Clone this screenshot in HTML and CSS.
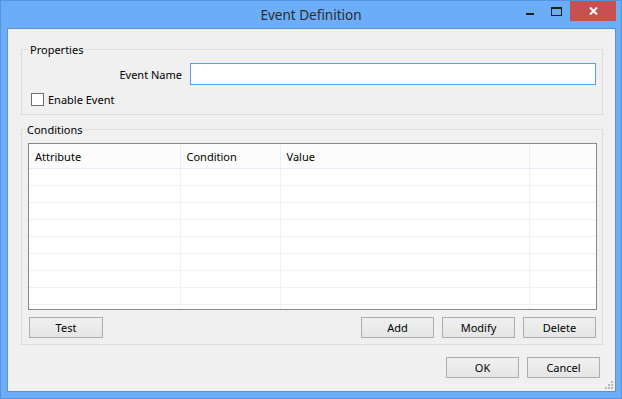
FILE: index.html
```html
<!DOCTYPE html>
<html lang="en">

<head>
    <meta charset="UTF-8">
    <title>Event Definition</title>
    <link rel="stylesheet" href="styles.css">
</head>

<body>
    <div class="window">
        <div class="title-bar">
            <div class="title">Event Definition</div>
            <div class="controls">
                <span class="btn-min"><i></i></span>
                <span class="btn-max"><i></i></span>
                <span class="btn-close">
                    <svg width="9" height="8" viewBox="0 0 9 8">
                        <path d="M1 0.5 L8 7.5 M8 0.5 L1 7.5" stroke="#fff" stroke-width="2" />
                    </svg>
                </span>
            </div>
        </div>

        <div class="client">
            <fieldset class="group group-props">
                <legend>Properties</legend>
                <div class="field-row">
                    <label for="event-name" class="field-label">Event Name</label>
                    <input type="text" id="event-name" class="text-box">
                </div>
                <div class="check-row">
                    <span class="check-box"></span>
                    <span>Enable Event</span>
                </div>
            </fieldset>

            <fieldset class="group group-cond">
                <legend>Conditions</legend>
                <div class="list-view">
                    <table>
                        <colgroup>
                            <col style="width: 151px">
                            <col style="width: 100px">
                            <col style="width: 249px">
                            <col>
                        </colgroup>
                        <thead>
                            <tr>
                                <th>Attribute</th>
                                <th>Condition</th>
                                <th>Value</th>
                                <th></th>
                            </tr>
                        </thead>
                        <tbody>
                            <tr><td></td><td></td><td></td><td></td></tr>
                            <tr><td></td><td></td><td></td><td></td></tr>
                            <tr><td></td><td></td><td></td><td></td></tr>
                            <tr><td></td><td></td><td></td><td></td></tr>
                            <tr><td></td><td></td><td></td><td></td></tr>
                            <tr><td></td><td></td><td></td><td></td></tr>
                            <tr><td></td><td></td><td></td><td></td></tr>
                            <tr><td></td><td></td><td></td><td></td></tr>
                            <tr><td></td><td></td><td></td><td></td></tr>
                        </tbody>
                    </table>
                </div>
                <div class="button-row">
                    <button class="win-btn">Test</button>
                    <div class="spacer"></div>
                    <button class="win-btn">Add</button>
                    <button class="win-btn">Modify</button>
                    <button class="win-btn">Delete</button>
                </div>
            </fieldset>

            <div class="dialog-buttons">
                <button class="win-btn">OK</button>
                <button class="win-btn">Cancel</button>
            </div>

            <svg class="grip" width="8" height="8" viewBox="0 0 8 8">
                <rect x="6" y="0" width="2" height="2" fill="#b8b8b8" />
                <rect x="3" y="3" width="2" height="2" fill="#b8b8b8" />
                <rect x="6" y="3" width="2" height="2" fill="#b8b8b8" />
                <rect x="0" y="6" width="2" height="2" fill="#b8b8b8" />
                <rect x="3" y="6" width="2" height="2" fill="#b8b8b8" />
                <rect x="6" y="6" width="2" height="2" fill="#b8b8b8" />
            </svg>
        </div>
    </div>
</body>

</html>
```

FILE: styles.css
```css
* {
    margin: 0;
    padding: 0;
    box-sizing: border-box;
}

body {
    font-family: "Noto Sans", "Open Sans", sans-serif;
    font-size: 11px;
    color: #000;
    background-color: #6badf6;
}

.window {
    width: 622px;
    height: 399px;
    background-color: #6badf6;
    border: 1px solid #5793df;
    display: flex;
    flex-direction: column;
}

/* title bar */
.title-bar {
    position: relative;
    height: 29px;
    display: flex;
    justify-content: center;
    align-items: center;
}

.title {
    font-size: 13.5px;
    color: #2b2b2b;
    padding-top: 1px;
}

.controls {
    position: absolute;
    top: 0;
    right: 5px;
    display: flex;
    align-items: flex-start;
}

.btn-min,
.btn-max {
    width: 26px;
    height: 20px;
    position: relative;
}

.btn-min i {
    position: absolute;
    left: 8px;
    top: 12px;
    width: 8px;
    height: 2px;
    background-color: #1f1f1f;
}

.btn-max i {
    position: absolute;
    left: 7px;
    top: 6px;
    width: 11px;
    height: 9px;
    border: 1px solid #1f1f1f;
    border-top-width: 2px;
}

.btn-close {
    width: 46px;
    height: 20px;
    background-color: #c75050;
    display: flex;
    justify-content: center;
    align-items: center;
}

/* client area */
.client {
    position: relative;
    flex-grow: 1;
    margin: 0 5px 6px 6px;
    border: 1px solid #5b8fd4;
    background-color: #f0f0f0;
    padding: 13px 12px 13px 13px;
}

.group {
    border: 1px solid #dcdcdc;
    padding: 0 5px 7px 9px;
}

.group legend {
    padding: 0 2px;
    margin-left: -3px;
    line-height: 15px;
}

.group-cond {
    margin-top: 7px;
    padding: 0 5px 6px 6px;
}

.field-row {
    display: flex;
    align-items: center;
    margin-top: 6px;
}

.field-label {
    width: 151px;
    text-align: right;
    margin-right: 8px;
}

.text-box {
    flex-grow: 1;
    height: 22px;
    margin-right: 1px;
    border: 1px solid #569de5;
    background-color: #fff;
    outline: none;
}

.check-row {
    display: flex;
    align-items: center;
    height: 16px;
    margin-top: 6px;
}

.check-box {
    width: 13px;
    height: 13px;
    border: 1px solid #707070;
    background-color: #fff;
    margin-right: 4px;
}

/* list view */
.list-view {
    margin-top: 6px;
    height: 167px;
    border: 1px solid #828790;
    background-color: #fff;
    overflow: hidden;
}

.list-view table {
    width: 100%;
    border-collapse: collapse;
    table-layout: fixed;
}

.list-view th {
    height: 24px;
    font-weight: normal;
    text-align: left;
    padding: 1px 0 0 6px;
    background-color: #fcfcfc;
    border-right: 1px solid #e5eef8;
    border-bottom: 1px solid #e5eef8;
}

.list-view td {
    height: 17px;
    border-right: 1px solid #f0f0f0;
    border-bottom: 1px solid #f0f0f0;
}

.list-view th:last-child,
.list-view td:last-child {
    border-right: none;
}

/* buttons */
.button-row {
    display: flex;
    gap: 8px;
    margin-top: 7px;
    padding: 0 1px;
}

.spacer {
    flex-grow: 1;
}

.win-btn {
    width: 73px;
    height: 21px;
    font-family: inherit;
    font-size: 11px;
    color: #000;
    border: 1px solid #acacac;
    background: linear-gradient(#f0f0f0, #e5e5e5);
}

.button-row .win-btn:first-child {
    width: 74px;
}

.dialog-buttons {
    display: flex;
    justify-content: flex-end;
    gap: 8px;
    margin-top: 12px;
    padding-right: 3px;
}

.grip {
    position: absolute;
    right: 2px;
    bottom: 2px;
}
```
